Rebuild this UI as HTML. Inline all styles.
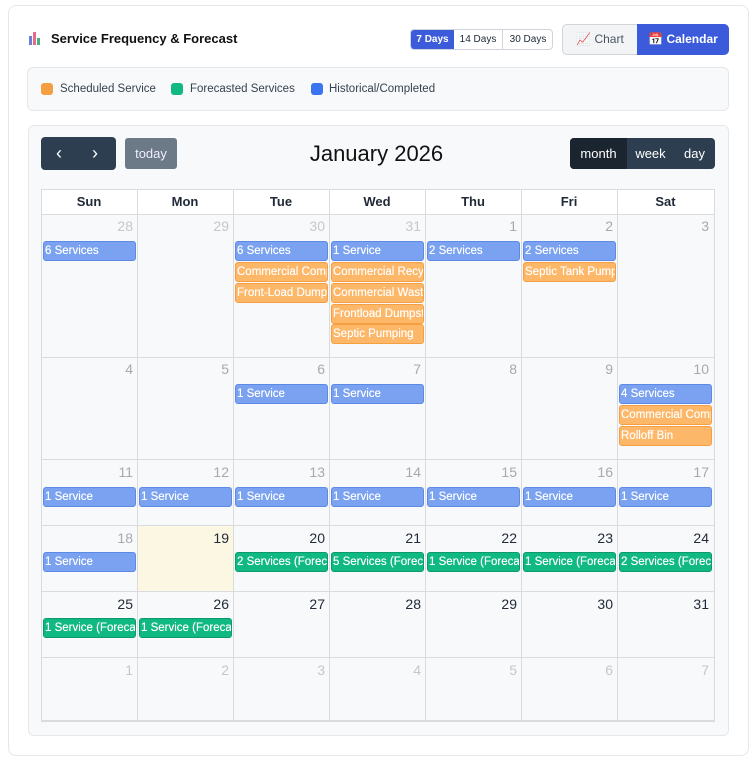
<!DOCTYPE html>
<html><head><meta charset="utf-8"><style>
*{box-sizing:border-box;margin:0;padding:0}
body{width:753px;height:762px;background:#fff;font-family:"Liberation Sans",sans-serif;position:relative;overflow:hidden;color:#1f2937}
.a{position:absolute}
.card{left:8px;top:5px;width:741px;height:751px;border:1px solid #e5e7eb;border-radius:8px;background:#fff}
.cal{left:28px;top:125px;width:701px;height:611px;border:1px solid #e5e7eb;border-radius:6px;background:#f8f9fa}
.vl{position:absolute;top:189px;height:532px;width:1px;background:#d9dbde}
.hl{position:absolute;left:41px;width:674px;height:1px;background:#d9dbde}
.dn{position:absolute;width:90px;text-align:right;font-size:14px}
.g{color:#c4c7cc}.p{color:#a6a9ae}.k{color:#1f2937}
.ev{position:absolute;width:93px;height:20px;border-radius:3px;font-size:11.5px;font-weight:normal;color:#fff;white-space:nowrap;overflow:hidden;padding:2px 1px;line-height:15px;text-shadow:0 0 0.4px #fff}
.b{background:#7aa2f0;border:1px solid #5d8ae6}
.o{background:#fdb768;border:1px solid #f59e42}
.gr{background:#10b981;border:1px solid #0c9a6b}
.hd{position:absolute;top:189px;height:25px;width:96px;text-align:center;font-weight:bold;font-size:13px;line-height:25px;background:#fff}
</style></head><body>
<div class="a card"></div>
<div class="a" style="left:29px;top:32px;width:12px;height:13px">
<div class="a" style="left:0;top:4px;width:3px;height:9px;background:#6b7fd7"></div>
<div class="a" style="left:4px;top:0;width:3px;height:13px;background:#e46a8f"></div>
<div class="a" style="left:8px;top:6px;width:3px;height:7px;background:#4caf7a"></div></div>
<div class="a" style="left:51px;top:31px;font-size:13px;font-weight:bold;color:#111">Service Frequency &amp; Forecast</div>
<div class="a" style="left:410px;top:29px;width:143px;height:21px;border:1px solid #d1d5db;border-radius:4px;background:#fff;font-size:10px;line-height:19px">
<div class="a" style="left:0;top:0;width:43px;height:19px;background:#3b5bdb;color:#fff;text-align:center;font-weight:bold;border-radius:3px 0 0 3px">7 Days</div>
<div class="a" style="left:43px;top:0;width:49px;height:19px;text-align:center;border-right:1px solid #d1d5db">14 Days</div>
<div class="a" style="left:92px;top:0;width:50px;height:19px;text-align:center">30 Days</div></div>
<div class="a" style="left:562px;top:24px;width:167px;height:31px;border:1px solid #d1d5db;border-radius:5px;background:#f3f4f6;font-size:12px;line-height:29px">
<div class="a" style="left:0;top:0;width:74px;text-align:center;color:#4b5563">📈 Chart</div>
<div class="a" style="left:74px;top:-1px;width:92px;height:31px;line-height:31px;background:#3b5bdb;color:#fff;text-align:center;font-weight:bold;border-radius:0 5px 5px 0">📅 Calendar</div></div>
<div class="a" style="left:27px;top:67px;width:702px;height:44px;border:1px solid #e5e7eb;border-radius:6px;background:#f8f9fa;font-size:11.5px;color:#374151">
<div class="a" style="left:13px;top:15px;width:12px;height:12px;border-radius:3px;background:#f59e42"></div><div class="a" style="left:32px;top:15px">Scheduled Service</div>
<div class="a" style="left:143px;top:15px;width:12px;height:12px;border-radius:3px;background:#10b981"></div><div class="a" style="left:162px;top:15px">Forecasted Services</div>
<div class="a" style="left:283px;top:15px;width:12px;height:12px;border-radius:3px;background:#3b74f0"></div><div class="a" style="left:301px;top:15px">Historical/Completed</div></div>
<div class="a cal"></div>
<div class="a" style="left:41px;top:137px;width:75px;height:33px;background:#2c3e50;border-radius:4px;color:#fff;font-size:18px;line-height:33px"><span class="a" style="left:15px">‹</span><span class="a" style="left:51px">›</span></div>
<div class="a" style="left:125px;top:138px;width:52px;height:31px;background:#6c7a87;border-radius:3px;color:#eef;font-size:13px;line-height:31px;text-align:center">today</div>
<div class="a" style="left:0;top:141px;width:753px;text-align:center;font-size:22px;color:#111">January 2026</div>
<div class="a" style="left:570px;top:138px;width:145px;height:31px;background:#2c3e50;border-radius:4px;color:#fff;font-size:13px;line-height:31px">
<div class="a" style="left:0;width:57px;height:31px;background:#1a252f;border-radius:4px 0 0 4px;text-align:center">month</div>
<div class="a" style="left:57px;width:47px;text-align:center">week</div>
<div class="a" style="left:104px;width:41px;text-align:center">day</div></div>
<div class="a" style="left:41px;top:189px;width:674px;height:532px;border:1px solid #d9dbde"></div>
<div class="hd" style="left:41px">Sun</div><div class="hd" style="left:137px">Mon</div><div class="hd" style="left:233px">Tue</div><div class="hd" style="left:329px">Wed</div><div class="hd" style="left:425px">Thu</div><div class="hd" style="left:521px">Fri</div><div class="hd" style="left:617px;width:97px">Sat</div>
<div class="a" style="left:138px;top:526px;width:95px;height:65px;background:#fcf7e3"></div>
<div class="vl" style="left:41px"></div><div class="vl" style="left:137px"></div><div class="vl" style="left:233px"></div><div class="vl" style="left:329px"></div><div class="vl" style="left:425px"></div><div class="vl" style="left:521px"></div><div class="vl" style="left:617px"></div><div class="vl" style="left:714px"></div>
<div class="hl" style="top:189px"></div><div class="hl" style="top:214px"></div><div class="hl" style="top:357px"></div><div class="hl" style="top:459px"></div><div class="hl" style="top:525px"></div><div class="hl" style="top:591px"></div><div class="hl" style="top:657px"></div><div class="hl" style="top:721px"></div>
<!-- row1 -->
<div class="dn g" style="left:43px;top:218px">28</div><div class="dn g" style="left:139px;top:218px">29</div><div class="dn g" style="left:235px;top:218px">30</div><div class="dn g" style="left:331px;top:218px">31</div><div class="dn p" style="left:427px;top:218px">1</div><div class="dn p" style="left:523px;top:218px">2</div><div class="dn p" style="left:619px;top:218px">3</div>
<div class="ev b" style="left:43px;top:241px">6 Services</div>
<div class="ev b" style="left:235px;top:241px">6 Services</div>
<div class="ev o" style="left:235px;top:262px">Commercial Compactor</div>
<div class="ev o" style="left:235px;top:283px">Front-Load Dumpster</div>
<div class="ev b" style="left:331px;top:241px">1 Service</div>
<div class="ev o" style="left:331px;top:262px">Commercial Recycling</div>
<div class="ev o" style="left:331px;top:283px">Commercial Waste</div>
<div class="ev o" style="left:331px;top:304px">Frontload Dumpster</div>
<div class="ev o" style="left:331px;top:324px">Septic Pumping</div>
<div class="ev b" style="left:427px;top:241px">2 Services</div>
<div class="ev b" style="left:523px;top:241px">2 Services</div>
<div class="ev o" style="left:523px;top:262px">Septic Tank Pumping</div>
<!-- row2 -->
<div class="dn p" style="left:43px;top:361px">4</div><div class="dn p" style="left:139px;top:361px">5</div><div class="dn p" style="left:235px;top:361px">6</div><div class="dn p" style="left:331px;top:361px">7</div><div class="dn p" style="left:427px;top:361px">8</div><div class="dn p" style="left:523px;top:361px">9</div><div class="dn p" style="left:619px;top:361px">10</div>
<div class="ev b" style="left:235px;top:384px">1 Service</div>
<div class="ev b" style="left:331px;top:384px">1 Service</div>
<div class="ev b" style="left:619px;top:384px">4 Services</div>
<div class="ev o" style="left:619px;top:405px">Commercial Compactor</div>
<div class="ev o" style="left:619px;top:426px">Rolloff Bin</div>
<!-- row3 -->
<div class="dn p" style="left:43px;top:464px">11</div><div class="dn p" style="left:139px;top:464px">12</div><div class="dn p" style="left:235px;top:464px">13</div><div class="dn p" style="left:331px;top:464px">14</div><div class="dn p" style="left:427px;top:464px">15</div><div class="dn p" style="left:523px;top:464px">16</div><div class="dn p" style="left:619px;top:464px">17</div>
<div class="ev b" style="left:43px;top:487px">1 Service</div><div class="ev b" style="left:139px;top:487px">1 Service</div><div class="ev b" style="left:235px;top:487px">1 Service</div><div class="ev b" style="left:331px;top:487px">1 Service</div><div class="ev b" style="left:427px;top:487px">1 Service</div><div class="ev b" style="left:523px;top:487px">1 Service</div><div class="ev b" style="left:619px;top:487px">1 Service</div>
<!-- row4 -->
<div class="dn p" style="left:43px;top:530px">18</div><div class="dn k" style="left:139px;top:530px">19</div><div class="dn k" style="left:235px;top:530px">20</div><div class="dn k" style="left:331px;top:530px">21</div><div class="dn k" style="left:427px;top:530px">22</div><div class="dn k" style="left:523px;top:530px">23</div><div class="dn k" style="left:619px;top:530px">24</div>
<div class="ev b" style="left:43px;top:552px">1 Service</div>
<div class="ev gr" style="left:235px;top:552px">2 Services (Forecast)</div><div class="ev gr" style="left:331px;top:552px">5 Services (Forecast)</div><div class="ev gr" style="left:427px;top:552px">1 Service (Forecast)</div><div class="ev gr" style="left:523px;top:552px">1 Service (Forecast)</div><div class="ev gr" style="left:619px;top:552px">2 Services (Forecast)</div>
<!-- row5 -->
<div class="dn k" style="left:43px;top:596px">25</div><div class="dn k" style="left:139px;top:596px">26</div><div class="dn k" style="left:235px;top:596px">27</div><div class="dn k" style="left:331px;top:596px">28</div><div class="dn k" style="left:427px;top:596px">29</div><div class="dn k" style="left:523px;top:596px">30</div><div class="dn k" style="left:619px;top:596px">31</div>
<div class="ev gr" style="left:43px;top:618px">1 Service (Forecast)</div><div class="ev gr" style="left:139px;top:618px">1 Service (Forecast)</div>
<!-- row6 -->
<div class="dn g" style="left:43px;top:662px">1</div><div class="dn g" style="left:139px;top:662px">2</div><div class="dn g" style="left:235px;top:662px">3</div><div class="dn g" style="left:331px;top:662px">4</div><div class="dn g" style="left:427px;top:662px">5</div><div class="dn g" style="left:523px;top:662px">6</div><div class="dn g" style="left:619px;top:662px">7</div>
</body></html>
